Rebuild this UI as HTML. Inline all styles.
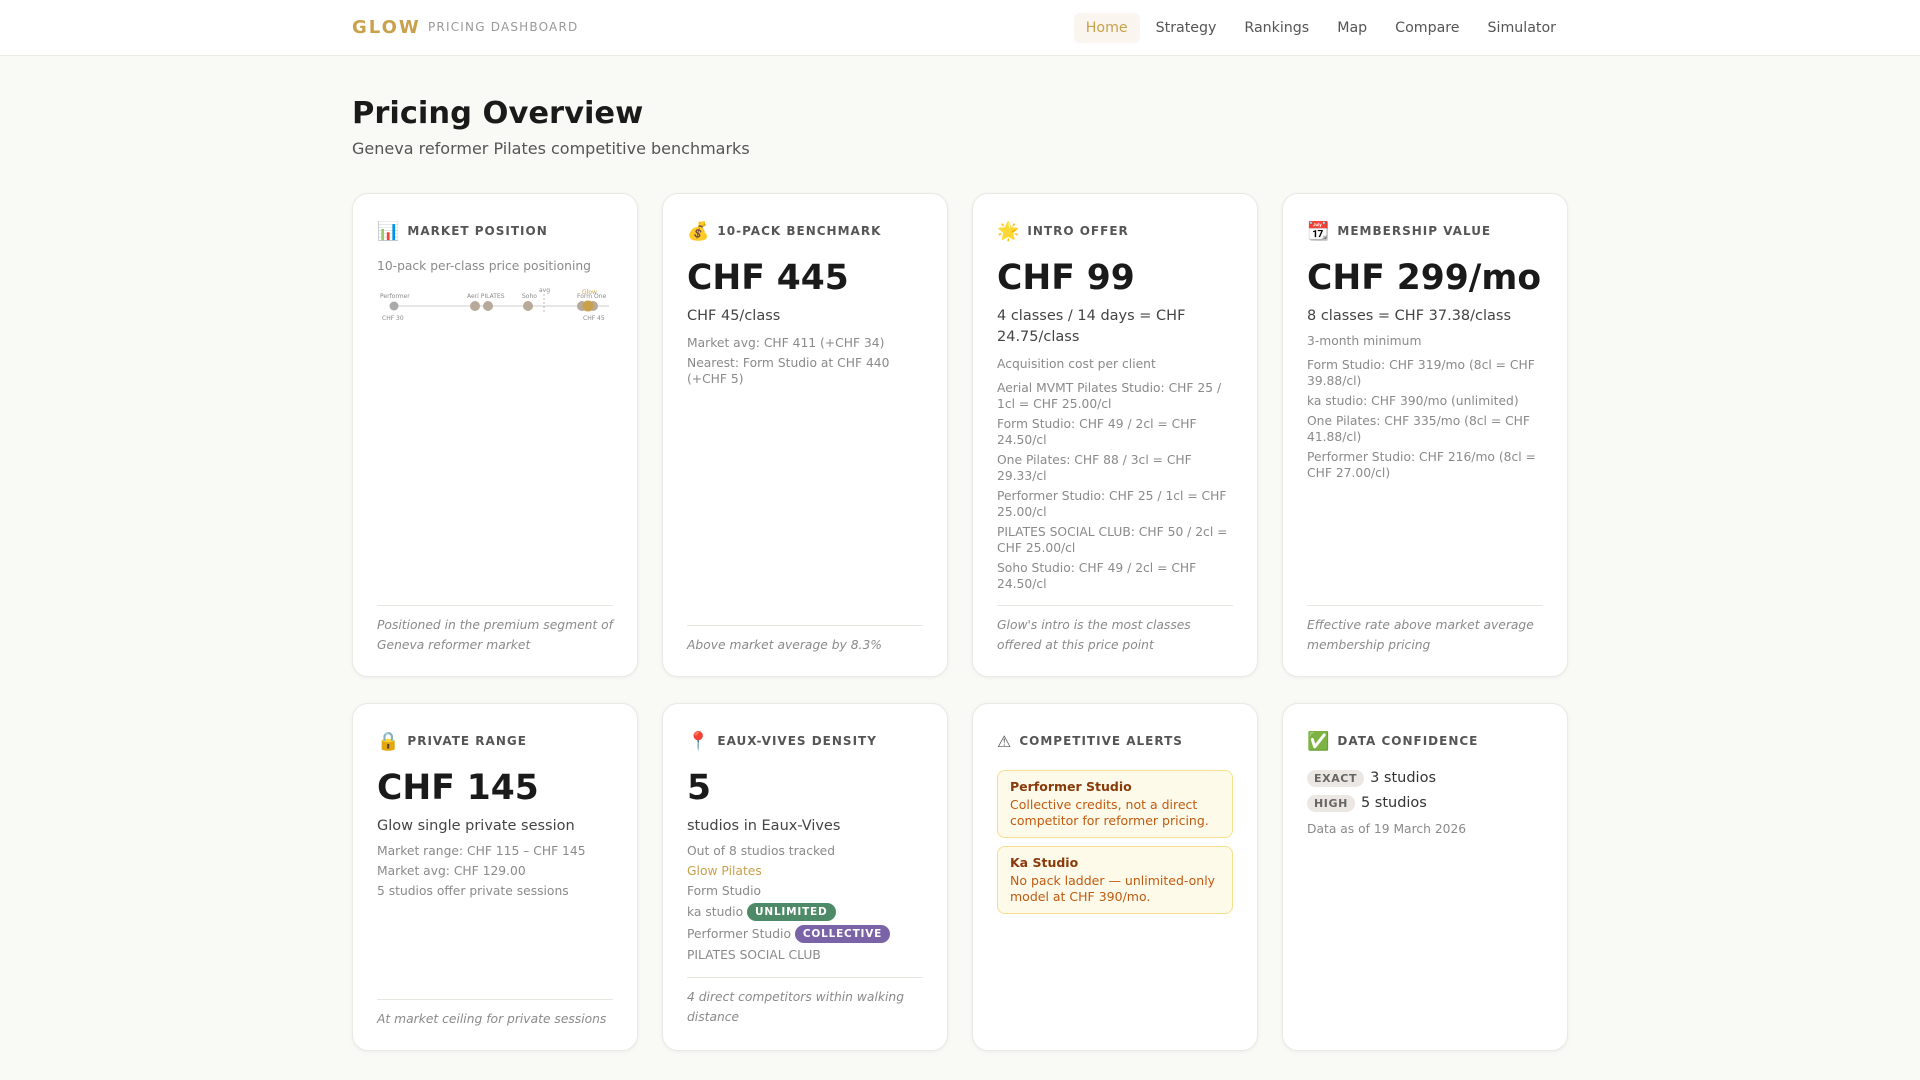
<!DOCTYPE html>
<html><head><meta charset="utf-8"><style>
*{box-sizing:border-box;margin:0;padding:0}
body{width:1920px;height:1080px;background:#f9f9f6;font-family:"DejaVu Sans","Liberation Sans",sans-serif;color:#222;overflow:hidden}
.hdr{height:56px;background:#fff;border-bottom:1px solid #eceae4;position:relative}
.logo{position:absolute;left:352px;top:17px;font-weight:bold;font-size:18px;letter-spacing:2px;color:#c9a04c}
.sub{position:absolute;left:428px;top:20px;font-size:12px;letter-spacing:1.2px;color:#999}
.nav{position:absolute;right:352px;top:13px;display:flex;gap:4px}
.nav a{font-size:14.2px;color:#555;padding:7px 12px;border-radius:6px;text-decoration:none}
.nav a.on{background:#faf5ee;color:#c9a04c}
h1{position:absolute;left:352px;top:96px;font-size:30.5px;font-weight:bold;color:#1a1a1a}
.lead{position:absolute;left:352px;top:139px;font-size:16px;color:#555}
.grid{position:absolute;left:352px;top:193px;width:1216px;display:grid;grid-template-columns:repeat(4,286px);column-gap:24px;row-gap:26px;grid-template-rows:484px 348px}
.card{background:#fff;border:1px solid #ebe9e4;border-radius:16px;box-shadow:0 1px 4px rgba(0,0,0,.05);padding:28px 24px 21px;display:flex;flex-direction:column}
.lab{font-size:12px;font-weight:bold;letter-spacing:1px;color:#555;display:flex;align-items:center;gap:8px;height:18px}
.lab .i{font-size:18px;letter-spacing:0}
.big{font-size:34.5px;font-weight:bold;color:#1a1a1a;margin-top:16px;line-height:44px;white-space:nowrap}
.mid{font-size:14.5px;color:#444;margin-top:6px;line-height:21px}
.sm{font-size:12.3px;color:#8a8a8a;line-height:16px;margin-top:4px}
.foot{margin-top:auto;border-top:1px solid #e8e6e1;padding-top:9px;font-size:12.3px;font-style:italic;color:#8a8a8a;line-height:20px}
.gold{color:#c9a04c}
.bd{display:inline-block;font-size:10.5px;font-weight:bold;color:#fff;padding:1px 8px;border-radius:9px;letter-spacing:.8px;vertical-align:1px}
.al{background:#fefae9;border:1px solid #f5df8a;border-radius:8px;padding:8px 12px;margin-top:0;font-size:12.5px;line-height:16px;color:#c05a10}
.al b{color:#8a3a0a;display:block;margin-bottom:2px}
.pill{display:inline-block;background:#ebe8e3;color:#666;font-size:11px;font-weight:bold;letter-spacing:.6px;padding:2px 7px;border-radius:9px;margin-right:6px}
.cf{font-size:14.5px;color:#333;margin-top:8px}
</style></head><body>
<div class="hdr"><div class="logo">GLOW</div><div class="sub">PRICING DASHBOARD</div>
<div class="nav"><a class="on">Home</a><a>Strategy</a><a>Rankings</a><a>Map</a><a>Compare</a><a>Simulator</a></div></div>
<h1>Pricing Overview</h1>
<div class="lead">Geneva reformer Pilates competitive benchmarks</div>
<div class="grid">
<div class="card"><div class="lab"><span class="i">📊</span>MARKET POSITION</div>
<div class="sm" style="margin-top:18px">10-pack per-class price positioning</div>
<svg width="240" height="44" style="margin-top:12px" font-family="DejaVu Sans" font-size="6" fill="#888">
<line x1="16" y1="20" x2="232" y2="20" stroke="#ddd" stroke-width="1.5"/>
<line x1="167" y1="8" x2="167" y2="28" stroke="#bbb" stroke-dasharray="2,2"/>
<text x="162" y="6">avg</text>
<text x="3" y="12">Performer</text><text x="90" y="12">Aeri PILATES</text><text x="145" y="12">Soho</text><text x="200" y="12">Form One</text>
<text x="205" y="8" fill="#c9a04c">Glow</text>
<circle cx="17" cy="20" r="4.5" fill="#aaa"/><circle cx="98" cy="20" r="5" fill="#b8aa9a"/><circle cx="111" cy="20" r="5" fill="#b8aa9a"/><circle cx="151" cy="20" r="5" fill="#b8aa9a"/><circle cx="205" cy="20" r="5" fill="#b8aa9a"/><circle cx="216" cy="20" r="5" fill="#b8aa9a"/><circle cx="211" cy="20" r="5.5" fill="#c9a04c"/>
<text x="5" y="34">CHF 30</text><text x="206" y="34">CHF 45</text></svg>
<div class="foot">Positioned in the premium segment of Geneva reformer market</div></div>

<div class="card"><div class="lab"><span class="i">💰</span>10-PACK BENCHMARK</div>
<div class="big">CHF 445</div><div class="mid">CHF 45/class</div>
<div class="sm" style="margin-top:8px">Market avg: CHF 411 (+CHF 34)</div>
<div class="sm">Nearest: Form Studio at CHF 440 (+CHF 5)</div>
<div class="foot">Above market average by 8.3%</div></div>

<div class="card"><div class="lab"><span class="i">🌟</span>INTRO OFFER</div>
<div class="big">CHF 99</div><div class="mid">4 classes / 14 days = CHF 24.75/class</div>
<div class="sm" style="margin-top:8px">Acquisition cost per client</div>
<div class="sm" style="margin-top:8px">Aerial MVMT Pilates Studio: CHF 25 / 1cl = CHF 25.00/cl</div>
<div class="sm">Form Studio: CHF 49 / 2cl = CHF 24.50/cl</div>
<div class="sm">One Pilates: CHF 88 / 3cl = CHF 29.33/cl</div>
<div class="sm">Performer Studio: CHF 25 / 1cl = CHF 25.00/cl</div>
<div class="sm">PILATES SOCIAL CLUB: CHF 50 / 2cl = CHF 25.00/cl</div>
<div class="sm">Soho Studio: CHF 49 / 2cl = CHF 24.50/cl</div>
<div class="foot">Glow's intro is the most classes offered at this price point</div></div>

<div class="card"><div class="lab"><span class="i">📆</span>MEMBERSHIP VALUE</div>
<div class="big">CHF 299/mo</div><div class="mid">8 classes = CHF 37.38/class</div>
<div class="sm" style="margin-top:6px">3-month minimum</div>
<div class="sm" style="margin-top:8px">Form Studio: CHF 319/mo (8cl = CHF 39.88/cl)</div>
<div class="sm">ka studio: CHF 390/mo (unlimited)</div>
<div class="sm">One Pilates: CHF 335/mo (8cl = CHF 41.88/cl)</div>
<div class="sm">Performer Studio: CHF 216/mo (8cl = CHF 27.00/cl)</div>
<div class="foot">Effective rate above market average membership pricing</div></div>

<div class="card"><div class="lab"><span class="i">🔒</span>PRIVATE RANGE</div>
<div class="big">CHF 145</div><div class="mid">Glow single private session</div>
<div class="sm" style="margin-top:6px">Market range: CHF 115 – CHF 145</div>
<div class="sm">Market avg: CHF 129.00</div>
<div class="sm">5 studios offer private sessions</div>
<div class="foot">At market ceiling for private sessions</div></div>

<div class="card"><div class="lab"><span class="i">📍</span>EAUX-VIVES DENSITY</div>
<div class="big">5</div><div class="mid">studios in Eaux-Vives</div>
<div class="sm" style="margin-top:6px">Out of 8 studios tracked</div>
<div class="sm gold">Glow Pilates</div>
<div class="sm">Form Studio</div>
<div class="sm">ka studio <span class="bd" style="background:#4e8a68">UNLIMITED</span></div>
<div class="sm">Performer Studio <span class="bd" style="background:#7b63a8">COLLECTIVE</span></div>
<div class="sm">PILATES SOCIAL CLUB</div>
<div class="foot" style="margin-top:14px">4 direct competitors within walking distance</div></div>

<div class="card"><div class="lab"><span class="i" style="font-size:16px">⚠</span>COMPETITIVE ALERTS</div>
<div class="al" style="margin-top:20px"><b>Performer Studio</b>Collective credits, not a direct competitor for reformer pricing.</div>
<div class="al" style="margin-top:8px"><b>Ka Studio</b>No pack ladder — unlimited-only model at CHF 390/mo.</div></div>

<div class="card"><div class="lab"><span class="i">✅</span>DATA CONFIDENCE</div>
<div class="cf" style="margin-top:20px"><span class="pill">EXACT</span>3 studios</div>
<div class="cf"><span class="pill">HIGH</span>5 studios</div>
<div class="sm" style="margin-top:9px">Data as of 19 March 2026</div></div>
</div>
</body></html>
